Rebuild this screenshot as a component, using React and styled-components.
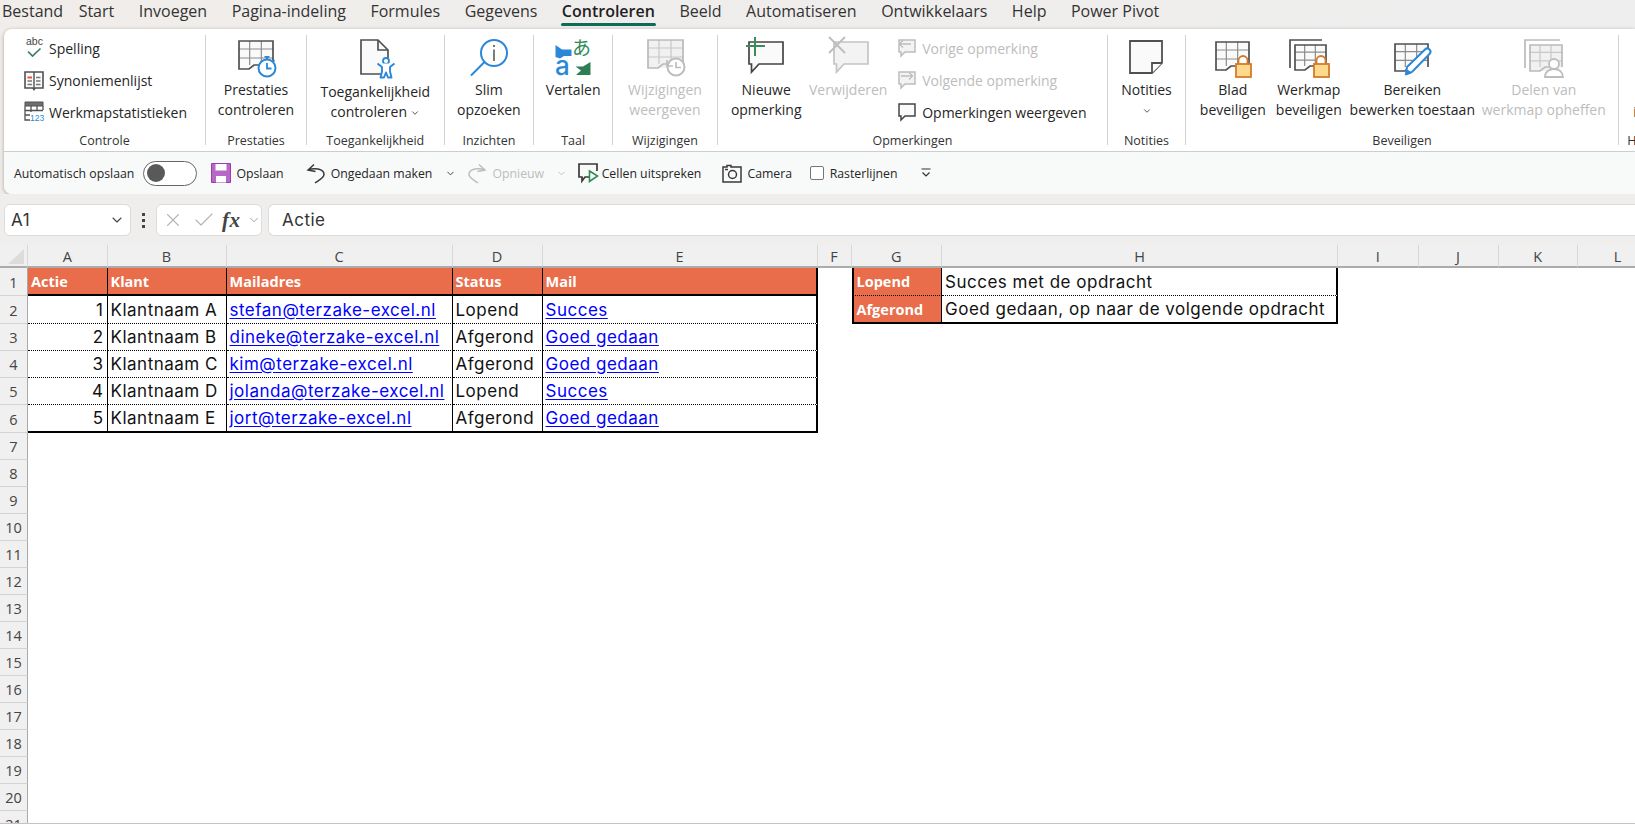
import React from 'react';
import styled, { createGlobalStyle } from 'styled-components';
import { ChevronDown, X, Check } from 'lucide-react';

const BLUE = '#2b88d8';
const DARK = '#505050';
const OFF = '#bdbdbd';
const UI_FONT = '"Open Sans", "Noto Sans", sans-serif';
const CELL_FONT = 'Inter, "Open Sans", sans-serif';

const GlobalStyle = createGlobalStyle`
  html, body {
    margin: 0;
    height: 100%;
    background: #fff;
    overflow: hidden;
  }
`;

const menuItems = [
  'Bestand', 'Start', 'Invoegen', 'Pagina-indeling', 'Formules', 'Gegevens',
  'Controleren', 'Beeld', 'Automatiseren', 'Ontwikkelaars', 'Help', 'Power Pivot',
];

const columns = [
  { name: 'A', width: 79.5 },
  { name: 'B', width: 119 },
  { name: 'C', width: 226 },
  { name: 'D', width: 90 },
  { name: 'E', width: 275 },
  { name: 'F', width: 34 },
  { name: 'G', width: 90.5 },
  { name: 'H', width: 396 },
  { name: 'I', width: 80.5 },
  { name: 'J', width: 80 },
  { name: 'K', width: 79.5 },
  { name: 'L', width: 80 },
];

const customers = [
  [1, 'Klantnaam A', 'stefan@terzake-excel.nl', 'Lopend', 'Succes'],
  [2, 'Klantnaam B', 'dineke@terzake-excel.nl', 'Afgerond', 'Goed gedaan'],
  [3, 'Klantnaam C', 'kim@terzake-excel.nl', 'Afgerond', 'Goed gedaan'],
  [4, 'Klantnaam D', 'jolanda@terzake-excel.nl', 'Lopend', 'Succes'],
  [5, 'Klantnaam E', 'jort@terzake-excel.nl', 'Afgerond', 'Goed gedaan'],
];

const headers = ['Actie', 'Klant', 'Mailadres', 'Status', 'Mail'];

const messages = [
  ['Lopend', 'Succes met de opdracht'],
  ['Afgerond', 'Goed gedaan, op naar de volgende opdracht'],
];

// every icon below is drawn in screen pixels, so 1 unit in the viewBox is 1px
const IconSvg = styled.svg`
  overflow: visible;
`;

function SheetLines({ x = 0, y = 0, w = 35, h = 30, line = DARK, grid = '#8c8c8c', fill = '#fafafa' }) {
  const cols = [w / 3, (2 * w) / 3];
  const rows = [h * 0.3, h * 0.6];
  return (
    <g transform={`translate(${x} ${y})`} fill="none">
      <path d={`M1 1H${w}V${h - 5}L${w - 6} ${h - 1}H12L16 ${h - 5}L12 ${h - 1}H1Z`} fill={fill} stroke="none" />
      {cols.map((c) => (
        <path key={c} d={`M${c} 1V${h - 5}`} stroke={grid} strokeWidth="1.2" />
      ))}
      {rows.map((r) => (
        <path key={r} d={`M1 ${r}H${w}`} stroke={grid} strokeWidth="1.2" />
      ))}
      <path d={`M${w} ${h - 5}V1H1V${h - 1}H11L16 ${h - 5}H${w * 0.7}`} stroke={line} strokeWidth="1.7" />
    </g>
  );
}

function Lock({ x, y }) {
  return (
    <g transform={`translate(${x} ${y})`}>
      <path d="M3.5 9V5.5a4.5 4.5 0 0 1 9 0V9" fill="#fff" stroke="#d57a2b" strokeWidth="1.8" />
      <rect x="1" y="9" width="15" height="13" fill="#fbd98d" stroke="#d57a2b" strokeWidth="1.8" />
    </g>
  );
}

function Bubble({ x = 0, y = 0, w = 35, h = 23, line = '#444', fill = '#fafafa' }) {
  return (
    <path
      transform={`translate(${x} ${y})`}
      d={`M1 1H${w}V${h}H11L3.5 ${h + 8}V${h}H1Z`}
      fill={fill}
      stroke={line}
      strokeWidth="1.7"
    />
  );
}

const BigSvg = ({ children }) => (
  <IconSvg width="44" height="44" viewBox="0 0 44 44">{children}</IconSvg>
);

const SmallSvg = ({ w = 20, h = 22, children }) => (
  <IconSvg width={w} height={h} viewBox={`0 0 ${w} ${h}`}>{children}</IconSvg>
);

const PerformanceIcon = () => (
  <BigSvg>
    <SheetLines x={4} y={4} />
    <circle cx="33" cy="32" r="8.5" fill="#fff" stroke={BLUE} strokeWidth="2" />
    <path d="M30.5 20.8h5M33 21v3M40.5 24l-2 2M33 27v5.5h4.5" fill="none" stroke={BLUE} strokeWidth="1.8" />
  </BigSvg>
);

const AccessibilityIcon = () => (
  <BigSvg>
    <path d="M8 4H25L35 14V38H8Z" fill="#fafafa" stroke={DARK} strokeWidth="1.7" />
    <path d="M25 4V14H35" fill="none" stroke={DARK} strokeWidth="1.7" />
    <circle cx="33" cy="25" r="3" fill="#fff" stroke={BLUE} strokeWidth="1.8" />
    <path
      d="M24.5 27.5L29 31V35.5L27.5 41.5H31L33 36.5L35 41.5H38.5L37 35.5V31L41.5 27.5"
      fill="#fff"
      stroke={BLUE}
      strokeWidth="1.9"
      strokeLinejoin="round"
    />
  </BigSvg>
);

const SmartLookupIcon = () => (
  <BigSvg>
    <circle cx="27" cy="17" r="13" fill="none" stroke={BLUE} strokeWidth="2" />
    <path d="M17.5 26L4 39.5" stroke={BLUE} strokeWidth="2" />
    <path d="M27 13.5V25" stroke="#444" strokeWidth="1.4" />
    <circle cx="27" cy="10" r="1" fill="#444" />
  </BigSvg>
);

const TranslateText = styled.text`
  font-family: ${(p) => p.$family};
  font-size: ${(p) => p.$size}px;
  font-weight: ${(p) => p.$weight || 400};
  fill: ${(p) => p.$color};
`;

const TranslateIcon = () => (
  <BigSvg>
    <path d="M4.5 9L11 13.5H20.5V20H13L9 22.5L4.5 21Z" fill={BLUE} />
    <TranslateText x="4" y="39" $family="Inter, sans-serif" $size={26} $weight={500} $color={BLUE}>a</TranslateText>
    <TranslateText x="21" y="19" $family='"Noto Sans CJK JP", sans-serif' $size={19} $color="#2e8b57">あ</TranslateText>
    <path d="M39.5 26V39H25L30 34.5L24.5 30.5H32Z" fill="#2e7d55" />
  </BigSvg>
);

const ChangesIcon = () => (
  <BigSvg>
    <SheetLines x={4} y={3} w={36} h={30} line="#bababa" grid="#c8c8c8" fill="#f1f1f1" />
    <circle cx="33" cy="31" r="8.5" fill="#fff" stroke="#bdbdbd" strokeWidth="2" />
    <path d="M33 26v5.5h5M24 24v6h6" fill="none" stroke="#bdbdbd" strokeWidth="1.7" />
  </BigSvg>
);

const NewCommentIcon = () => (
  <BigSvg>
    <Bubble x={4} y={5} />
    <path d="M2 10H21M11 1V20" stroke="#3c8a60" strokeWidth="2" fill="none" />
  </BigSvg>
);

const DeleteCommentIcon = () => (
  <BigSvg>
    <Bubble x={7} y={5} line="#c4c4c4" fill="#f3f3f3" />
    <path d="M3 1L19 17M19 1L3 17" stroke="#bdbdbd" strokeWidth="1.8" fill="none" />
  </BigSvg>
);

const NotesIcon = () => (
  <BigSvg>
    <path d="M6 5H38V27L28 37H6Z" fill="#fafafa" stroke={DARK} strokeWidth="1.8" />
    <path d="M38 27H28V37" fill="#fff" stroke={DARK} strokeWidth="1.8" />
  </BigSvg>
);

const ProtectSheetIcon = () => (
  <BigSvg>
    <SheetLines x={4} y={5} w={34} />
    <Lock x={24} y={19} />
  </BigSvg>
);

const ProtectBookIcon = () => (
  <BigSvg>
    <path d="M3 32V4H35" fill="none" stroke={DARK} strokeWidth="1.7" />
    <SheetLines x={7} y={8} w={32} h={27} />
    <Lock x={26} y={19} />
  </BigSvg>
);

const EditRangesIcon = () => (
  <BigSvg>
    <SheetLines x={4} y={7} w={34} h={29} />
    <path d="M16 38l1-7L35 13.5c1.5-1.5 3-1.5 4.5 0s1.5 3 0 4.5L22 36Z" fill="#fff" stroke={BLUE} strokeWidth="2" />
    <path d="M16 39.5l1.5-6 4.5 3.5Z" fill={BLUE} />
  </BigSvg>
);

const UnshareIcon = () => (
  <BigSvg>
    <path d="M3 32V4H38" fill="none" stroke="#bababa" strokeWidth="1.7" />
    <SheetLines x={7} y={8} w={33} h={28} line="#bababa" grid="#c8c8c8" fill="#f1f1f1" />
    <circle cx="32" cy="28" r="5" fill="#fff" stroke="#bdbdbd" strokeWidth="1.8" />
    <path d="M23 41c0-5 4-8 9-8s9 3 9 8Z" fill="#fff" stroke="#bdbdbd" strokeWidth="1.8" />
  </BigSvg>
);

const IconLabel = styled.text`
  font-family: "Liberation Sans", sans-serif;
  font-size: ${(p) => p.$size}px;
  fill: ${(p) => p.$color};
`;

const SpellingIcon = () => (
  <SmallSvg h={24}>
    <IconLabel x="2" y="9" $size={10.5} $color="#444">abc</IconLabel>
    <path d="M4 15.5L8.5 20L16.5 12.5" fill="none" stroke="#3f7d5f" strokeWidth="1.7" />
  </SmallSvg>
);

const ThesaurusIcon = () => (
  <SmallSvg h={21}>
    <path d="M1 2H19V18H11L10 19.5L9 18H1Z" fill="#fafafa" stroke={DARK} strokeWidth="1.6" />
    <path d="M10 2V19" stroke={DARK} strokeWidth="1.4" />
    <path d="M3.5 7.5H8" stroke="#e0533c" strokeWidth="1.8" />
    <path d="M3.5 11H8M3.5 14.5H8M12 7.5H16.5M12 11H16.5M12 14.5H16.5" stroke="#777" strokeWidth="1.3" />
  </SmallSvg>
);

const StatsIcon = () => (
  <SmallSvg h={22}>
    <path d="M1 1H19V5H1Z" fill="#6f6f6f" stroke={DARK} strokeWidth="1" />
    <path d="M1 5V19H6M19 5V9M1 9.5H19M1 14H6M7 5V11M13 5V10" fill="none" stroke={DARK} strokeWidth="1.3" />
    <IconLabel x="6" y="20" $size={8.5} $color={BLUE}>123</IconLabel>
  </SmallSvg>
);

const SmallBubble = ({ off, children }) => {
  const line = off ? '#bdbdbd' : '#444';
  return (
    <SmallSvg w={18} h={20}>
      <path d="M1 2H17V14H7L3 18V14H1Z" fill={off ? '#f3f3f3' : '#fafafa'} stroke={line} strokeWidth="1.5" />
      {children}
    </SmallSvg>
  );
};

const PrevCommentIcon = () => (
  <SmallBubble off>
    <path d="M13 6H1.5M5 2.5L1.5 6L5 9.5" fill="#fff" stroke="#bdbdbd" strokeWidth="1.4" />
  </SmallBubble>
);

const NextCommentIcon = () => (
  <SmallBubble off>
    <path d="M3 6H14.5M11 2.5L14.5 6L11 9.5" fill="#fff" stroke="#bdbdbd" strokeWidth="1.4" />
  </SmallBubble>
);

const SaveIcon = () => (
  <SmallSvg h={20}>
    <path d="M0.5 0.5H19.5V19.5H0.5Z" fill="#b767c6" stroke="#9b3fae" />
    <path d="M4.5 1H15.5V7.5H4.5Z" fill="#fff" />
    <path d="M5 13H15V19.5H5Z" fill="#fff" />
  </SmallSvg>
);

const UndoIcon = ({ off }) => (
  <SmallSvg w={20} h={21}>
    <path
      transform={off ? 'matrix(-1 0 0 1 20 0)' : undefined}
      d="M8 1.5L2 7L9.5 8.5M2 7C8 4.5 18 5.5 18 11.5C18 15 13 17 9 20"
      fill="none"
      stroke={off ? '#bdbdbd' : '#3a3a3a'}
      strokeWidth="1.5"
    />
  </SmallSvg>
);

const SpeakIcon = () => (
  <SmallSvg w={21} h={20}>
    <path d="M12 14H7L4 18V14H1V1H19V8" fill="none" stroke="#3a3a3a" strokeWidth="1.7" />
    <path d="M11.5 8L19.5 13L11.5 18.5Z" fill="#fff" stroke="#2e8b57" strokeWidth="1.6" />
  </SmallSvg>
);

const CameraIcon = () => (
  <SmallSvg h={19}>
    <path d="M1 3H5V1.5H9V3H19V18H1Z" fill="#fafafa" stroke="#3a3a3a" strokeWidth="1.5" />
    <circle cx="10.5" cy="10.5" r="4" fill="none" stroke="#3a3a3a" strokeWidth="1.5" />
    <path d="M3 5.5H6" stroke="#3a3a3a" strokeWidth="1.4" />
  </SmallSvg>
);

const CustomizeIcon = () => (
  <SmallSvg w={10} h={10}>
    <path d="M0.5 1H9.5M1.5 4.5L5 8L8.5 4.5" fill="none" stroke="#333" strokeWidth="1.2" />
  </SmallSvg>
);

const Page = styled.div`
  display: flex;
  flex-direction: column;
  width: 1635px;
  height: 824px;
  overflow: hidden;
  background: #fff;
  font-family: ${UI_FONT};
  color: #262626;
`;

const MenuBar = styled.nav`
  display: flex;
  gap: 24.5px;
  height: 29px;
  padding-left: 2px;
  background: linear-gradient(90deg, #f0edea, #eeeeee);
`;

const MenuItem = styled.span`
  position: relative;
  margin-right: ${(p) => (p.$tight ? '-9px' : '0')};
  font-size: 16px;
  line-height: 22px;
  white-space: nowrap;
  font-weight: ${(p) => (p.$active ? 600 : 400)};
  color: ${(p) => (p.$active ? '#1f1f1f' : '#333')};

  ${(p) =>
    p.$active &&
    `
    &::after {
      content: '';
      position: absolute;
      left: -1px;
      right: -1px;
      top: 23px;
      height: 2.5px;
      border-radius: 2px;
      background: #0f6b57;
    }
  `}
`;

const RibbonArea = styled.div`
  padding-left: 4px;
  background: linear-gradient(90deg, #f0edea, #eeeeee);
`;

const Ribbon = styled.div`
  height: 165px;
  border-radius: 8px 0 0 8px;
  overflow: hidden;
  background: #fff;
  box-shadow: 0 1px 4px rgba(0, 0, 0, 0.3);
`;

const Groups = styled.div`
  display: flex;
  height: 123px;
  padding-top: 6px;
  box-sizing: border-box;
  border-bottom: 1px solid #cdcdcd;
`;

const Group = styled.section`
  flex: none;
  display: flex;
  flex-direction: column;
  box-sizing: border-box;
  width: ${(p) => p.$width}px;
  height: 110px;
  border-right: ${(p) => (p.$last ? 'none' : '1px solid #d2d2d2')};
`;

const GroupBody = styled.div`
  display: flex;
  flex: none;
  height: 96px;
  justify-content: ${(p) => (p.$start ? 'flex-start' : 'center')};
  gap: ${(p) => p.$gap || 0}px;
  padding-left: ${(p) => p.$pad || 0}px;
  box-sizing: border-box;
`;

const GroupLabel = styled.div`
  height: 20px;
  font-size: 12.5px;
  line-height: 20px;
  text-align: ${(p) => (p.$left ? 'left' : 'center')};
  padding-left: ${(p) => (p.$left ? '8px' : '0')};
  white-space: nowrap;
  color: #333;
`;

const BigButton = styled.div`
  flex: none;
  display: flex;
  flex-direction: column;
  align-items: center;
  width: ${(p) => (p.$width ? `${p.$width}px` : 'auto')};
  padding-top: 1px;
  font-size: 14px;
  line-height: 20px;
  white-space: nowrap;
  text-align: center;
  color: ${(p) => (p.$off ? OFF : '#262626')};

  > svg {
    display: block;
  }
`;

const ButtonText = styled.div`
  margin-top: ${(p) => (p.$low ? 2 : 0)}px;
`;

const SmallChevron = styled(ChevronDown)`
  vertical-align: -1px;
  margin-left: ${(p) => p.$gap || 3}px;
`;

const Stack = styled.div`
  display: flex;
  flex-direction: column;
  margin-top: -3px;
  padding-left: ${(p) => p.$pad || 0}px;
`;

const StackItem = styled.div`
  display: flex;
  align-items: center;
  gap: ${(p) => p.$gap}px;
  height: 32px;
  font-size: 14px;
  white-space: nowrap;
  color: ${(p) => (p.$off ? OFF : '#262626')};

  svg {
    flex: none;
    display: block;
  }
`;

const CutOffText = styled.div`
  padding: 67px 0 0 14px;
  font-size: 14px;
  line-height: 20px;
  white-space: nowrap;
`;

const Toolbar = styled.div`
  display: flex;
  align-items: center;
  height: 42px;
  background: #f8f9f9;
  font-size: 12.3px;
  white-space: nowrap;
`;

const ToolItem = styled.div`
  display: flex;
  flex: none;
  align-items: center;
  gap: ${(p) => p.$gap || 5}px;
  margin-left: ${(p) => p.$left}px;
  color: ${(p) => (p.$off ? OFF : '#262626')};

  svg {
    display: block;
  }
`;

const Toggle = styled.div`
  position: relative;
  box-sizing: border-box;
  width: 54px;
  height: 25px;
  margin-left: 9px;
  border: 1px solid #666;
  border-radius: 13px;
  background: #fff;

  &::before {
    content: '';
    position: absolute;
    left: 3px;
    top: 2.5px;
    width: 18px;
    height: 18px;
    border-radius: 50%;
    background: #595959;
  }
`;

const CheckBox = styled.span`
  box-sizing: border-box;
  width: 14px;
  height: 14px;
  border: 1px solid #777;
  border-radius: 2px;
  background: #fff;
`;

const FormulaBar = styled.div`
  display: flex;
  align-items: flex-start;
  height: 51px;
  padding: 10px 0 0 4px;
  box-sizing: border-box;
  background: #f0eeec;
`;

const BarBox = styled.div`
  display: flex;
  align-items: center;
  box-sizing: border-box;
  flex: ${(p) => (p.$grow ? 1 : 'none')};
  width: ${(p) => (p.$width ? `${p.$width}px` : 'auto')};
  height: 32px;
  margin-left: ${(p) => p.$left || 0}px;
  padding-left: ${(p) => p.$pad || 0}px;
  border: 1px solid #dcdcdc;
  border-right: ${(p) => (p.$grow ? 'none' : '1px solid #dcdcdc')};
  border-radius: ${(p) => (p.$grow ? '6px 0 0 6px' : '6px')};
  background: #fff;
  font-family: ${CELL_FONT};
  font-size: 17px;
  letter-spacing: 0.5px;
  color: #333;
`;

const NameText = styled.span`
  flex: 1;
`;

const Dots = styled.div`
  display: flex;
  flex-direction: column;
  gap: 3px;
  margin: 9px 0 0 11px;
`;

const Dot = styled.span`
  width: 3px;
  height: 3px;
  background: #444;
`;

const FormulaMark = styled.span`
  width: 25px;
  margin-left: 6px;
  font-family: "Liberation Serif", serif;
  font-style: italic;
  font-weight: 700;
  font-size: 21px;
  color: #444;
`;

const Sheet = styled.div`
  display: grid;
  grid-template-columns: 28px ${columns.map((c) => `${c.width}px`).join(' ')};
  grid-template-rows: 23px 28px 28px 27px 27px 27px 28px repeat(15, 27px);
  flex: 1;
  overflow: hidden;
  border-bottom: 1px solid #c4c4c4;
`;

const Corner = styled.div`
  position: relative;
  background: #f0f0f0;
  border-right: 1px solid #d8d8d8;
  border-bottom: 2px solid #ababab;
  box-sizing: border-box;

  &::after {
    content: '';
    position: absolute;
    right: 3px;
    bottom: 2px;
    border-style: solid;
    border-width: 0 0 15px 16px;
    border-color: transparent transparent #dcdcdc transparent;
  }
`;

const ColumnHead = styled.div`
  display: flex;
  align-items: center;
  justify-content: center;
  box-sizing: border-box;
  padding-top: 2px;
  background: #f0f0f0;
  border-right: 1px solid #d8d8d8;
  border-bottom: 2px solid #ababab;
  font-size: 14.5px;
  color: #444;
`;

const RowHead = styled.div`
  display: flex;
  align-items: center;
  justify-content: center;
  box-sizing: border-box;
  padding-top: 1px;
  background: #f0f0f0;
  border-right: 1px solid #a9a9a9;
  border-bottom: 1px solid #d3d3d3;
  font-size: 14.5px;
  color: #444;
`;

const edge = { thin: '1px solid #000', thick: '2px solid #000', dotted: '1px dotted #000' };

const Cell = styled.div`
  display: flex;
  align-items: center;
  justify-content: ${(p) => (p.$number ? 'flex-end' : 'flex-start')};
  box-sizing: border-box;
  min-width: 0;
  padding: 0 3px;
  white-space: nowrap;
  overflow: visible;
  font-family: ${(p) => (p.$head ? UI_FONT : CELL_FONT)};
  font-size: ${(p) => (p.$head ? '14.5px' : '17px')};
  font-weight: ${(p) => (p.$head ? 700 : 400)};
  letter-spacing: ${(p) => (p.$head ? '0' : '0.5px')};
  color: ${(p) => (p.$head ? '#fff' : '#111')};
  background: ${(p) => (p.$head ? '#e96d4a' : '#fff')};
  border-left: ${(p) => (p.$left ? edge[p.$left] : 'none')};
  border-right: ${(p) => (p.$right ? edge[p.$right] : 'none')};
  border-bottom: ${(p) => (p.$bottom ? edge[p.$bottom] : 'none')};
`;

const CellLink = styled.span`
  color: #0000ff;
  text-decoration: underline;
  text-underline-offset: 2px;
`;

function customerCell(rowIndex, colIndex) {
  const last = colIndex === 4;
  const right = last ? 'thick' : 'thin';
  if (rowIndex === 0) {
    return <Cell key={colIndex} $head $right={right} $bottom="thick">{headers[colIndex]}</Cell>;
  }
  const value = customers[rowIndex - 1][colIndex];
  return (
    <Cell
      key={colIndex}
      $number={colIndex === 0}
      $right={right}
      $bottom={rowIndex === customers.length ? 'thick' : 'dotted'}
    >
      {colIndex === 2 || colIndex === 4 ? <CellLink>{value}</CellLink> : value}
    </Cell>
  );
}

function messageCell(rowIndex, colIndex) {
  const bottom = rowIndex === messages.length - 1 ? 'thick' : 'dotted';
  const value = messages[rowIndex][colIndex - 6];
  if (colIndex === 6) {
    return <Cell key={colIndex} $head $left="thick" $right="thin" $bottom={bottom}>{value}</Cell>;
  }
  return <Cell key={colIndex} $right="thick" $bottom={bottom}>{value}</Cell>;
}

function renderCell(rowIndex, colIndex) {
  if (rowIndex <= customers.length && colIndex <= 4) return customerCell(rowIndex, colIndex);
  if (rowIndex < messages.length && (colIndex === 6 || colIndex === 7)) return messageCell(rowIndex, colIndex);
  return <Cell key={colIndex} />;
}

const rowNumbers = Array.from({ length: 21 }, (_, i) => i);

export default function App() {
  return (
    <Page>
      <GlobalStyle />
      <MenuBar>
        {menuItems.map((item) => (
          <MenuItem key={item} $active={item === 'Controleren'} $tight={item === 'Bestand'}>{item}</MenuItem>
        ))}
      </MenuBar>

      <RibbonArea>
        <Ribbon>
          <Groups>
            <Group $width={202}>
              <GroupBody $start $pad={20}>
                <Stack>
                  <StackItem $gap={5}><SpellingIcon />Spelling</StackItem>
                  <StackItem $gap={5}><ThesaurusIcon />Synoniemenlijst</StackItem>
                  <StackItem $gap={5}><StatsIcon />Werkmapstatistieken</StackItem>
                </Stack>
              </GroupBody>
              <GroupLabel>Controle</GroupLabel>
            </Group>

            <Group $width={101}>
              <GroupBody>
                <BigButton>
                  <PerformanceIcon />
                  <ButtonText>Prestaties<br />controleren</ButtonText>
                </BigButton>
              </GroupBody>
              <GroupLabel>Prestaties</GroupLabel>
            </Group>

            <Group $width={137.6}>
              <GroupBody>
                <BigButton>
                  <AccessibilityIcon />
                  <ButtonText $low>
                    Toegankelijkheid<br />controleren
                    <SmallChevron size={10} strokeWidth={2} color="#333" />
                  </ButtonText>
                </BigButton>
              </GroupBody>
              <GroupLabel>Toegankelijkheid</GroupLabel>
            </Group>

            <Group $width={89.6}>
              <GroupBody>
                <BigButton>
                  <SmartLookupIcon />
                  <ButtonText>Slim<br />opzoeken</ButtonText>
                </BigButton>
              </GroupBody>
              <GroupLabel>Inzichten</GroupLabel>
            </Group>

            <Group $width={79}>
              <GroupBody>
                <BigButton>
                  <TranslateIcon />
                  <ButtonText>Vertalen</ButtonText>
                </BigButton>
              </GroupBody>
              <GroupLabel>Taal</GroupLabel>
            </Group>

            <Group $width={104.5}>
              <GroupBody>
                <BigButton $off>
                  <ChangesIcon />
                  <ButtonText>Wijzigingen<br />weergeven</ButtonText>
                </BigButton>
              </GroupBody>
              <GroupLabel>Wijzigingen</GroupLabel>
            </Group>

            <Group $width={390.5}>
              <GroupBody $start $pad={12.5} $gap={7}>
                <BigButton $width={72}>
                  <NewCommentIcon />
                  <ButtonText>Nieuwe<br />opmerking</ButtonText>
                </BigButton>
                <BigButton $width={78} $off>
                  <DeleteCommentIcon />
                  <ButtonText>Verwijderen</ButtonText>
                </BigButton>
                <Stack $pad={4}>
                  <StackItem $gap={6} $off><PrevCommentIcon />Vorige opmerking</StackItem>
                  <StackItem $gap={6} $off><NextCommentIcon />Volgende opmerking</StackItem>
                  <StackItem $gap={6}><SmallBubble />Opmerkingen weergeven</StackItem>
                </Stack>
              </GroupBody>
              <GroupLabel>Opmerkingen</GroupLabel>
            </Group>

            <Group $width={77.6}>
              <GroupBody>
                <BigButton>
                  <NotesIcon />
                  <ButtonText>
                    Notities<br />
                    <SmallChevron size={10} strokeWidth={2} color="#333" $gap={1} />
                  </ButtonText>
                </BigButton>
              </GroupBody>
              <GroupLabel>Notities</GroupLabel>
            </Group>

            <Group $width={433.4}>
              <GroupBody $start $pad={12.5} $gap={7}>
                <BigButton $width={69}>
                  <ProtectSheetIcon />
                  <ButtonText>Blad<br />beveiligen</ButtonText>
                </BigButton>
                <BigButton $width={69}>
                  <ProtectBookIcon />
                  <ButtonText>Werkmap<br />beveiligen</ButtonText>
                </BigButton>
                <BigButton $width={124}>
                  <EditRangesIcon />
                  <ButtonText>Bereiken<br />bewerken toestaan</ButtonText>
                </BigButton>
                <BigButton $width={125} $off>
                  <UnshareIcon />
                  <ButtonText>Delen van<br />werkmap opheffen</ButtonText>
                </BigButton>
              </GroupBody>
              <GroupLabel>Beveiligen</GroupLabel>
            </Group>

            <Group $width={120} $last>
              <GroupBody $start>
                <CutOffText>inkt</CutOffText>
              </GroupBody>
              <GroupLabel $left>Handschrift</GroupLabel>
            </Group>
          </Groups>

          <Toolbar>
            <ToolItem $left={10}>Automatisch opslaan</ToolItem>
            <Toggle />
            <ToolItem $left={14}><SaveIcon />Opslaan</ToolItem>
            <ToolItem $left={22}><UndoIcon />Ongedaan maken</ToolItem>
            <ToolItem $left={12.5}><ChevronDown size={11} strokeWidth={2} color="#333" /></ToolItem>
            <ToolItem $left={11.5} $off><UndoIcon off />Opnieuw</ToolItem>
            <ToolItem $left={11.5}><ChevronDown size={11} strokeWidth={2} color={OFF} /></ToolItem>
            <ToolItem $left={11} $gap={3}><SpeakIcon />Cellen uitspreken</ToolItem>
            <ToolItem $left={21}><CameraIcon />Camera</ToolItem>
            <ToolItem $left={17.5} $gap={6}><CheckBox />Rasterlijnen</ToolItem>
            <ToolItem $left={23}><CustomizeIcon /></ToolItem>
          </Toolbar>
        </Ribbon>
      </RibbonArea>

      <FormulaBar>
        <BarBox $width={127} $pad={6}>
          <NameText>A1</NameText>
          <ChevronDown size={16} strokeWidth={1.6} color="#444" style={{ marginRight: 5 }} />
        </BarBox>
        <Dots><Dot /><Dot /><Dot /></Dots>
        <BarBox $left={11} $width={106} $pad={5}>
          <X size={22} strokeWidth={1.2} color="#b5b5b5" />
          <Check size={24} strokeWidth={1.2} color="#b5b5b5" style={{ marginLeft: 8 }} />
          <FormulaMark>fx</FormulaMark>
          <ChevronDown size={14} strokeWidth={1.3} color="#888" />
        </BarBox>
        <BarBox $left={6} $grow $pad={13}>Actie</BarBox>
      </FormulaBar>

      <Sheet>
        <Corner />
        {columns.map((c) => (
          <ColumnHead key={c.name}>{c.name}</ColumnHead>
        ))}
        {rowNumbers.map((rowIndex) => (
          <React.Fragment key={rowIndex}>
            <RowHead>{rowIndex + 1}</RowHead>
            {columns.map((c, colIndex) => renderCell(rowIndex, colIndex))}
          </React.Fragment>
        ))}
      </Sheet>
    </Page>
  );
}
